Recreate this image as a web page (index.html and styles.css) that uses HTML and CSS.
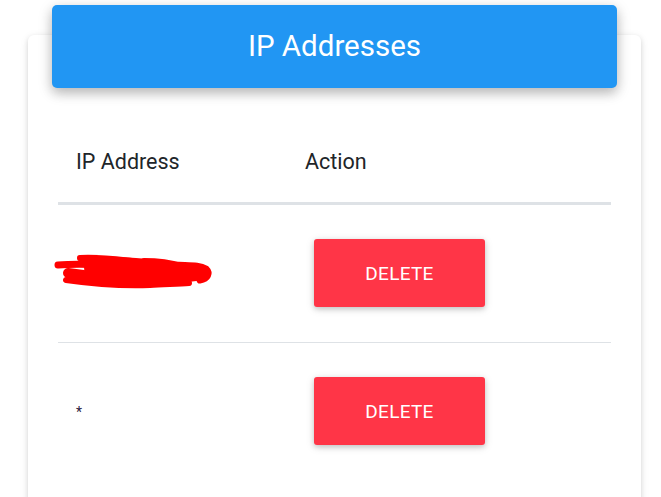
FILE: index.html
```html
<!DOCTYPE html>
<html>
<head>
<meta charset="utf-8">
<link rel="stylesheet" href="styles.css">
</head>
<body>
<div class="page">
  <div class="card">
    <div class="card-header">
      <h2 class="card-title">IP Addresses</h2>
    </div>
    <div class="card-body">
      <div class="table">
        <div class="row head">
          <div class="cell col-ip">IP Address</div>
          <div class="cell col-action">Action</div>
        </div>
        <div class="row">
          <div class="cell col-ip">
            <svg class="scribble" width="160" height="40" viewBox="0 0 160 40">
              <g fill="none" stroke="#ff0000" stroke-linecap="round" stroke-linejoin="round">
                <path d="M4 12 C30 10 60 12 90 14 C110 15 130 16 148 18" stroke-width="7"/>
                <path d="M14 20 C40 24 70 26 100 26 C120 26 135 24 150 22" stroke-width="10"/>
                <path d="M30 8 C55 6 85 8 120 12 C135 13 145 12 152 16 C156 20 154 26 146 27" stroke-width="7"/>
                <path d="M12 27 C40 31 70 33 96 32 C110 31 125 31 135 30" stroke-width="6"/>
                <path d="M36 15 C60 17 90 19 124 20" stroke-width="12"/>
                <path d="M26 5 C45 4 60 6 78 8" stroke-width="6"/>
                <path d="M90 8 C105 8 118 10 128 13" stroke-width="6"/>
              </g>
            </svg>
          </div>
          <div class="cell col-action"><button class="btn-delete">DELETE</button></div>
        </div>
        <div class="row">
          <div class="cell col-ip"><span class="ip">*</span></div>
          <div class="cell col-action"><button class="btn-delete">DELETE</button></div>
        </div>
      </div>
    </div>
  </div>
</div>
</body>
</html>
```

FILE: styles.css
```css
html, body {
  margin: 0;
  padding: 0;
  background: #ffffff;
  font-family: Roboto, "Liberation Sans", Arial, sans-serif;
  color: #212529;
}
.page {
  padding: 35px 20px 0 28px;
}
.card {
  width: 613px;
  height: 480px;
  background: #fff;
  border-radius: 6px;
  box-shadow: 0 2px 5px 0 rgba(0,0,0,0.12), 0 2px 10px 0 rgba(0,0,0,0.08);
  display: flex;
  flex-direction: column;
}
.card-header {
  margin: -30px 24px 0 24px;
  height: 83px;
  background: #2196f3;
  border-radius: 5px;
  box-shadow: 0 5px 11px 0 rgba(0,0,0,0.18), 0 4px 15px 0 rgba(0,0,0,0.15);
  display: flex;
  align-items: center;
  justify-content: center;
}
.card-title {
  margin: 0;
  color: #fff;
  font-size: 29.5px;
  font-weight: 400;
  line-height: 1;
  padding-top: 1px;
}
.card-body {
  padding: 0 30px;
}
.table {
  display: flex;
  flex-direction: column;
}
.row {
  display: flex;
  align-items: center;
  height: 137px;
  border-bottom: 1px solid #dee2e6;
}
.row.head {
  height: 111px;
  border-bottom: 3px solid #dee2e6;
  padding-top: 3px;
  align-items: flex-start;
}
.row.head .cell {
  padding-top: 59px;
  font-size: 21.5px;
  line-height: 24px;
}
.row:last-child {
  border-bottom: none;
}
.cell {
  font-size: 16px;
}
.col-ip {
  width: 229px;
  padding-left: 18px;
  box-sizing: border-box;
}
.row .col-ip .scribble {
  display: block;
  margin-left: -22px;
  margin-top: -2px;
}
.col-action {
  padding-left: 18px;
}
.ip {
  font-size: 14px;
  position: relative;
  top: 0;
  color: #2a2040;
}
.btn-delete {
  margin-left: 9px;
  margin-top: -1px;
  width: 171px;
  height: 68px;
  background: #ff3547;
  color: #fff;
  border: none;
  border-radius: 3px;
  font-family: Roboto, "Liberation Sans", Arial, sans-serif;
  font-size: 19px;
  letter-spacing: 0.3px;
  box-shadow: 0 2px 5px 0 rgba(0,0,0,0.16), 0 2px 10px 0 rgba(0,0,0,0.12);
  padding: 0;
}
```
